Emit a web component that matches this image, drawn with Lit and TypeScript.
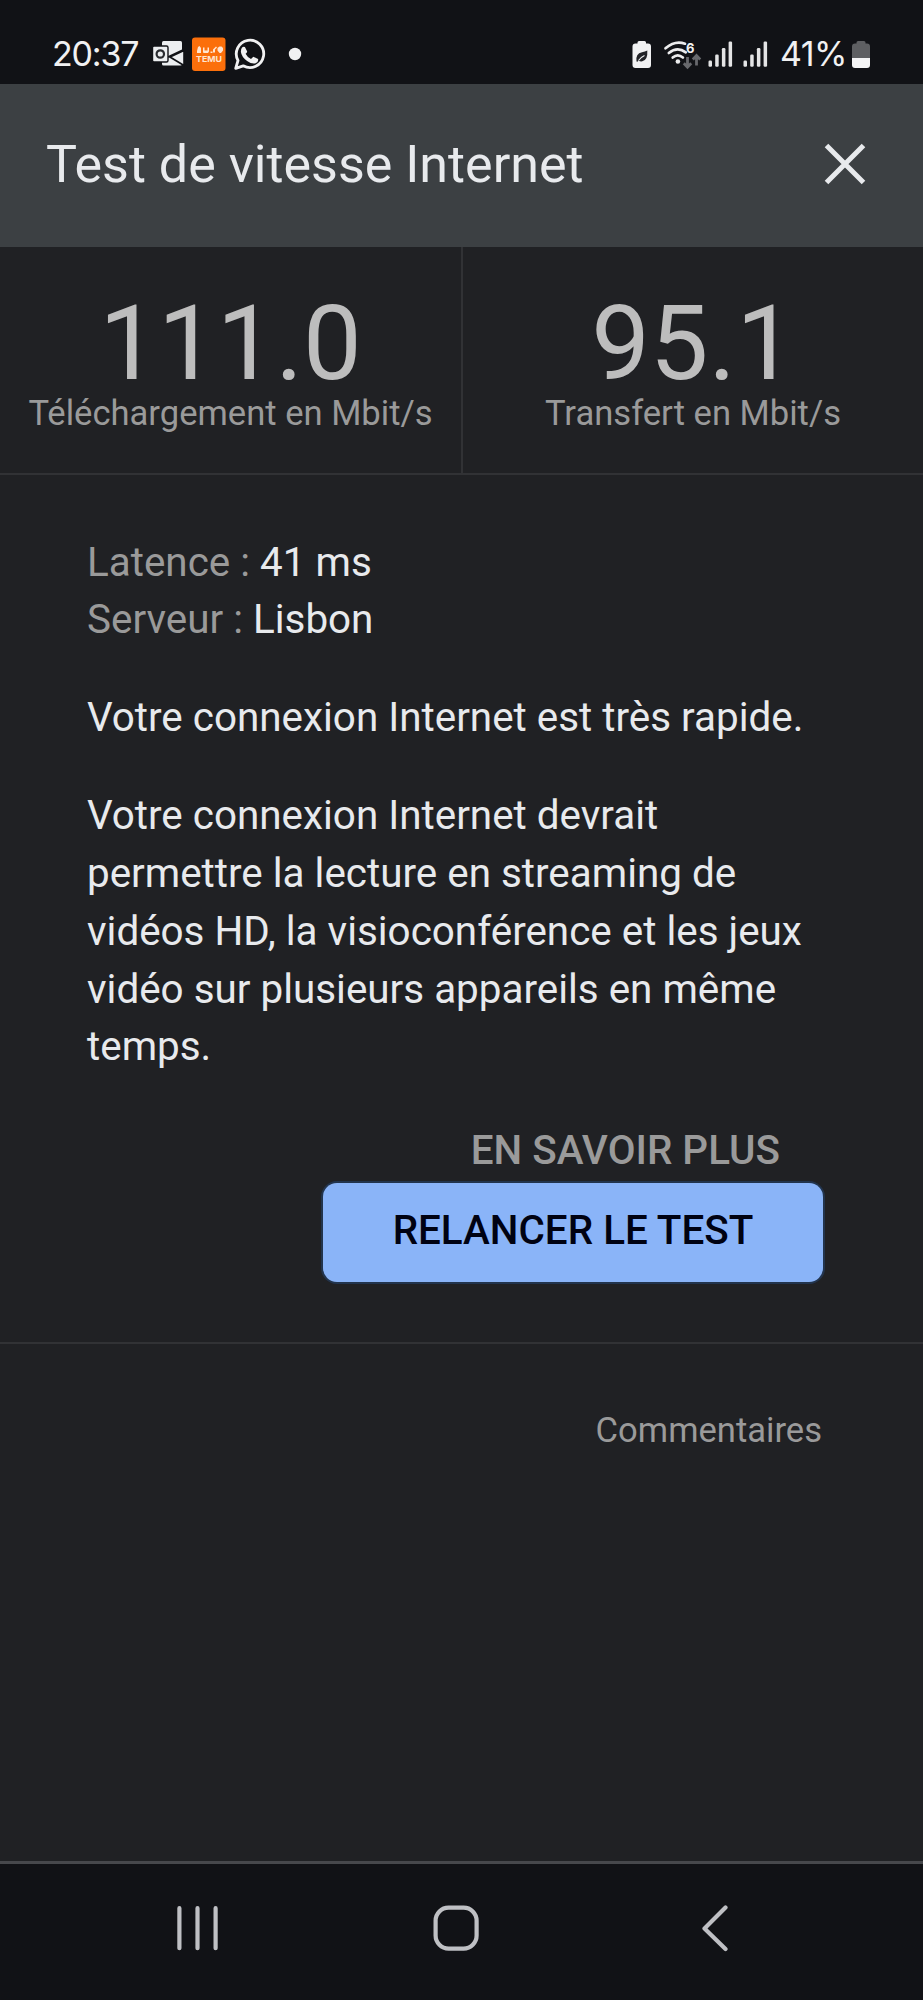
import { LitElement, html, css, svg } from "lit";
import { customElement } from "lit/decorators.js";

@customElement("status-bar")
class StatusBar extends LitElement {
  static styles = css`
    :host { display: flex; align-items: flex-start; height: 84px; box-sizing: border-box; background: #111216; color: #f1f1f2; }
    svg { display: block; flex: none; }
    .time, .pct { flex: none; box-sizing: border-box; font-family: Inter, "Liberation Sans", sans-serif; font-size: 34px; line-height: 42px; padding-top: 33px; white-space: nowrap; }
    .time { padding-left: 52px; width: 150px; letter-spacing: -1.2px; }
    .pct { letter-spacing: -0.6px; width: 70px; }
    .left { width: 170px; height: 84px; }
    .right { margin-left: auto; width: 150px; height: 84px; }
    .batt { width: 73px; height: 84px; }
    .temu { font: 700 7.6px Inter, sans-serif; fill: #ffe6d2; }
    .six { font: 700 13px Inter, sans-serif; fill: #f1f1f2; }
  `;
  bars(x: number) {
    return [0, 1, 2, 3].map((i) => {
      const top = [60.5, 54.5, 48, 41.5][i];
      return svg`<rect x=${x + i * 6.7} y=${top} width="3.5" height=${66.8 - top} rx="1.2" fill="#e4e4e5"/>`;
    });
  }
  render() {
    return html`
      <div class="time">20:37</div>
      <svg class="left" viewBox="150 0 170 84">
        <rect x="162" y="41" width="20" height="24.5" rx="1.5" fill="#eceef0"/>
        <path d="M184 50.5 170 57l14 8.5z" fill="#eceef0" stroke="#111216" stroke-width="1.6"/>
        <path d="M168 57l17-8" stroke="#111216" stroke-width="1.8"/>
        <rect x="152.5" y="46" width="15.5" height="16" rx="1.5" fill="#eceef0" stroke="#111216" stroke-width="1.4"/>
        <circle cx="160.3" cy="54" r="3.7" fill="none" stroke="#292b2f" stroke-width="2.2"/>
        <rect x="192" y="37.5" width="33.5" height="33.5" rx="3" fill="#fb6f0b"/>
        <path d="M197 53v-2l1-4 1.5-1 1.5 2v5zM203 47.5h1.5v3h3v-3h1.5v4l-1 1.5h-4.5l-.5-1zM210.5 51.5h2v1.5h-2zM213 49.5l3-3 1 1-2 2v3h-2zM217.5 48l2-1.5h2l1.5 1.5v2.5l-2 2.5h-1.5l-2-2.5z" fill="#ffe6d2"/>
        <text class="temu" x="196" y="61.5" textLength="26" lengthAdjust="spacingAndGlyphs">TEMU</text>
        <path d="M235.7 68.3 238 60.5a13.7 13.7 0 1 1 5.2 5.3z" fill="none" stroke="#f1f1f2" stroke-width="2.8" stroke-linejoin="round"/>
        <path d="M242.3 47.3q1.2-1 2.6-.2l2.3 4.3q-.2 1.500-1.600 2.400 1.800 3.700 5.400 5.200l2.300-2.300 4.800 2.300q.6 3-2.500 4.200-3.800 1-8.500-2.300-5.500-4-6.200-9-.1-3 1.400-4.600z" fill="#f1f1f2"/>
        <circle cx="295" cy="54" r="6.2" fill="#f1f1f2"/>
      </svg>
      <svg class="right" viewBox="630 0 150 84">
        <path d="M635.5 43.5h2v-1q0-1.5 1.5-1.5h5.5q1.5 0 1.5 1.500v1h2q3 0 3 3V65q0 3-3 3h-12.500q-3 0-3-3V46.500q0-3 3-3z" fill="#f1f1f2"/>
        <path d="M636.5 61.5q-1.2-8 5.5-9.3 3-.5 5.300-1.700.7 9.500-5 10.800-2 .4-3.800-.8l-1 1.300z" fill="#222327"/>
        <path d="M638.5 60.500q2.500-3.500 6-5" stroke="#f1f1f2" stroke-width="1.1" fill="none"/>
        <g fill="none" stroke="#ececed" stroke-width="2.7" stroke-linecap="round">
          <path d="M665.5 48.300q9.500-8.300 19.500-4.600"/>
          <path d="M668.8 53q8.500-7 17-.7"/>
          <path d="M672.7 57.500q5-4.300 10.200 0"/>
        </g>
        <circle cx="677.9" cy="61.5" r="2.3" fill="#ececed"/>
        <text class="six" x="686" y="53">6</text>
        <path d="M687.5 57v10M683.8 63.300l3.700 4 3.700-4M696.500 65.500v-9M692.800 59.500l3.700-4 3.700 4" fill="none" stroke="#68696d" stroke-width="2.8"/>
        ${this.bars(708.5)}${this.bars(743.5)}
      </svg>
      <div class="pct">41%</div>
      <svg class="batt" viewBox="850 0 73 84">
        <path d="M855 43.5h1.5v-1q0-1.500 1.500-1.500h6q1.500 0 1.500 1.500v1h1.500q3 0 3 3V58h-18V46.500q0-3 3-3z" fill="#5e5f62"/>
        <path d="M852 58h18v7q0 3-3 3h-12q-3 0-3-3z" fill="#f4f4f5"/>
      </svg>
    `;
  }
}

@customElement("nav-bar")
class NavBar extends LitElement {
  static styles = css`
    :host { display: flex; align-items: center; box-sizing: border-box; height: 139px; border-top: 3px solid #47484c; background: #111216; padding: 0 195px 8px 175px; }
    svg { display: block; width: 46px; height: 48px; fill: none; stroke: #bfc0c4; stroke-width: 4.2; stroke-linecap: round; stroke-linejoin: round; }
    .home { margin-left: 211.5px; }
    .back { width: 26px; margin-left: auto; }
  `;
  render() {
    return html`
      <svg viewBox="0 0 46 48"><path d="M4.4 4.2v40M22.5 4.2v40M40.6 4.2v40"/></svg>
      <svg class="home" viewBox="0 0 46 48"><rect x="2.6" y="3.6" width="41" height="41" rx="13"/></svg>
      <svg class="back" viewBox="0 0 26 48"><path d="M23.5 3.5 2.5 24.5 23.5 45"/></svg>
    `;
  }
}

@customElement("app-root")
class AppRoot extends LitElement {
  static styles = css`
    :host { display: flex; flex-direction: column; width: 923px; height: 2000px; background: #202124; font-family: Roboto, "Liberation Sans", sans-serif; color: #e8eaed; overflow: hidden; }
    svg { display: block; flex: none; }
    .head { display: flex; align-items: center; justify-content: space-between; height: 163px; background: #3c4043; padding: 0 56px 1px 46px; box-sizing: border-box; }
    .title { font-size: 52px; line-height: 62px; white-space: nowrap; }
    .close { width: 44px; height: 44px; margin-bottom: 3px; }
    .stats { display: grid; grid-template-columns: 463px 1fr; height: 228px; box-sizing: border-box; border-bottom: 2px solid #313235; }
    .stat { display: flex; flex-direction: column; align-items: center; padding-top: 47px; }
    .stat:first-child { border-right: 2px solid #313235; }
    .num { font-size: 104.5px; line-height: 100px; color: #bdbdbd; }
    .label { font-size: 34.6px; line-height: 38px; color: #9a9a9a; white-space: nowrap; }
    .body { display: flex; flex-direction: column; gap: 40.4px; padding: 58.5px 96px 0 87px; font-size: 40.4px; line-height: 57.7px; height: 869px; box-sizing: border-box; border-bottom: 2px solid #313235; }
    .body p { margin: 0; white-space: nowrap; }
    .dim { color: #9a9a9a; }
    .actions { display: flex; flex-direction: column; align-items: flex-end; gap: 9px; margin: 11.500px 4px 0 0; font-weight: 500; white-space: nowrap; }
    .more { line-height: 46px; padding-right: 43px; color: #9a9a9a; }
    .retry { display: flex; align-items: center; justify-content: center; box-sizing: border-box; width: 500px; height: 99px; padding-bottom: 3px; border-radius: 14px; background: #8ab4f8; color: #000212; box-shadow: 0 0 0 2px #22344d; }
    .foot { flex: 1; padding: 66px 101px 0 0; text-align: right; font-size: 34.6px; line-height: 40px; color: #9a9a9a; }
  `;
  render() {
    return html`
      <status-bar></status-bar>
      <div class="head">
        <div class="title">Test de vitesse Internet</div>
        <svg class="close" viewBox="0 0 44 44"><path d="M3.5 3.5l37 37M40.5 3.5l-37 37" stroke="#e8eaed" stroke-width="5"/></svg>
      </div>
      <div class="stats">
        <div class="stat"><div class="num">111.0</div><div class="label">Téléchargement en Mbit/s</div></div>
        <div class="stat"><div class="num">95.1</div><div class="label">Transfert en Mbit/s</div></div>
      </div>
      <div class="body">
        <p><span class="dim">Latence :</span> 41 ms<br><span class="dim">Serveur :</span> Lisbon</p>
        <p>Votre connexion Internet est très rapide.</p>
        <p>Votre connexion Internet devrait<br>permettre la lecture en streaming de<br>vidéos HD, la visioconférence et les jeux<br>vidéo sur plusieurs appareils en même<br>temps.</p>
        <div class="actions">
          <div class="more">EN SAVOIR PLUS</div>
          <div class="retry">RELANCER LE TEST</div>
        </div>
      </div>
      <div class="foot">Commentaires</div>
      <nav-bar></nav-bar>
    `;
  }
}
